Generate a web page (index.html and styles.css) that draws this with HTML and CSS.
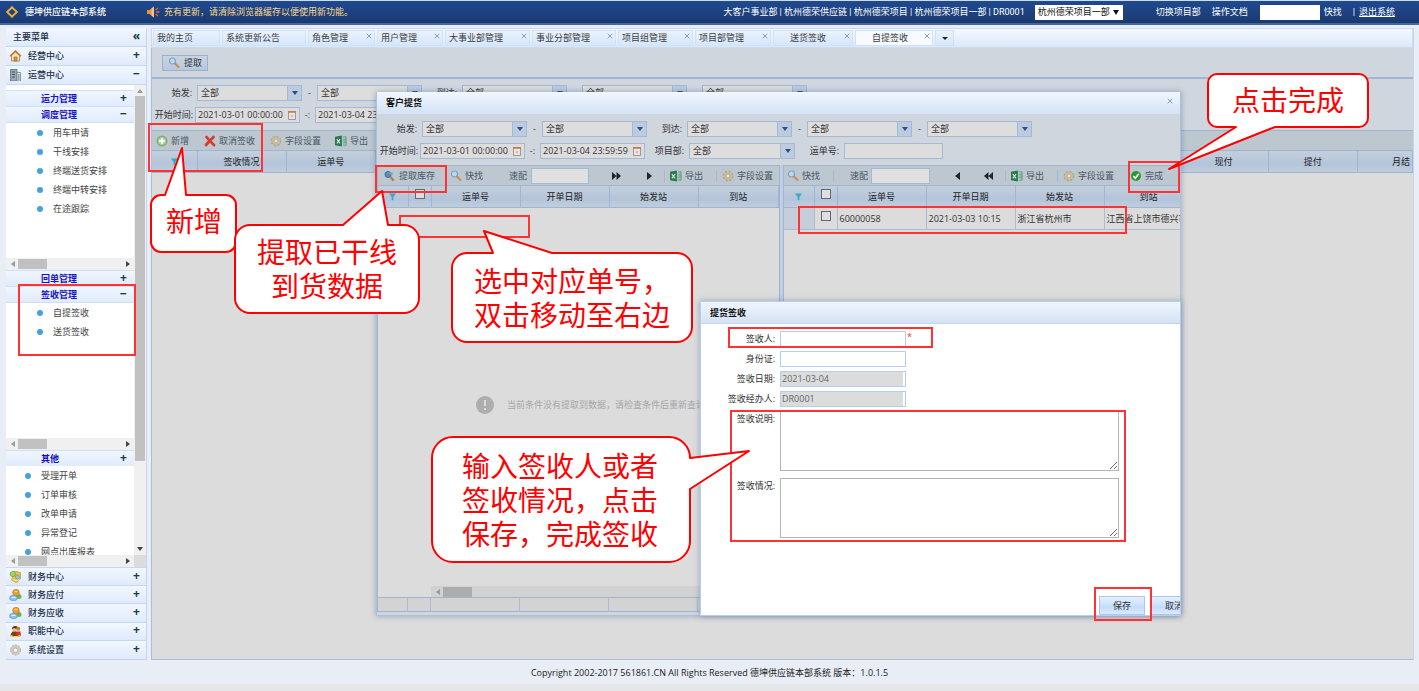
FILE: index.html
```html
<!DOCTYPE html>
<html lang="zh-CN">
<head>
<meta charset="utf-8">
<title>德坤供应链本部系统</title>
<link rel="stylesheet" href="styles.css">
</head>
<body>
<svg class="defs" aria-hidden="true">
  <symbol id="search" viewBox="0 0 12 12"><circle cx="4.500" cy="4" r="3" fill="#bcd9ee" stroke="#7ba3cc" stroke-width="1.200"/><path d="M7 6.500 10.500 10" stroke="#c88d55" stroke-width="2" stroke-linecap="round"/></symbol>
  <symbol id="fetch" viewBox="0 0 12 12"><circle cx="4" cy="4.500" r="3" fill="#4f8fc0" stroke="#3f6f9c"/><path d="M3 2.500h6l-1 3" fill="#7ba3a8"/><path d="M6.500 7 9.500 10.500" stroke="#b07b3c" stroke-width="2"/></symbol>
  <symbol id="excel" viewBox="0 0 13 12"><path d="M0 1.500 7.500 0v12L0 10.500z" fill="#2b7a4b"/><path d="M2 4l3.500 4.500M5.500 4 2 8.500" stroke="#dcebe0" stroke-width="1.200"/><path d="M8.500 1.500H12v9H8.500M8.500 4H12M8.500 6H12M8.500 8H12" fill="none" stroke="#5c9a76"/></symbol>
  <symbol id="gear" viewBox="0 0 12 12"><circle cx="6" cy="6" r="4.600" fill="#c5b693" stroke="#b3a88f" stroke-width="1.600" stroke-dasharray="2.200 1.400"/><circle cx="6" cy="6" r="3.800" fill="#c6bda6"/><circle cx="6" cy="6" r="1.800" fill="#e9e4d6" stroke="#b3a583" stroke-width=".6"/></symbol>
  <symbol id="add" viewBox="0 0 12 12"><circle cx="6" cy="6" r="4.800" fill="#a9cf9b" stroke="#7fae72" stroke-width="1.400"/><path d="M6 3.200v5.600M3.200 6h5.600" stroke="#fff" stroke-width="2"/></symbol>
  <symbol id="cross" viewBox="0 0 12 12"><path d="M2.500 2c2 2.500 4.500 5.500 7.500 8M9.500 2C7 4.500 4.500 7 2 10" fill="none" stroke="#d63b2f" stroke-width="2.800" stroke-linecap="round"/></symbol>
  <symbol id="check" viewBox="0 0 12 12"><circle cx="6" cy="6" r="5" fill="#269a35"/><path d="M3.300 6 5.300 8.200 8.800 3.800" fill="none" stroke="#fff" stroke-width="1.600"/></symbol>
  <symbol id="funnel" viewBox="0 0 8 8"><path d="M0 0h8L5 4v4L3 7V4z" fill="#35a9c9"/></symbol>
  <symbol id="x" viewBox="0 0 6 6"><path d="M.7.7l4.600 4.600M5.300.7.7 5.300" stroke="#7fa3b4"/></symbol>
  <symbol id="right" viewBox="0 0 5 8"><path d="M0 0l5 4-5 4z" fill="#1c2630"/></symbol>
  <symbol id="right2" viewBox="0 0 9 8"><path d="M0 0l4.500 4L0 8zM4.500 0 9 4 4.500 8z" fill="#1c2630"/></symbol>
  <symbol id="left" viewBox="0 0 5 8"><path d="M5 0 0 4l5 4z" fill="#1c2630"/></symbol>
  <symbol id="left2" viewBox="0 0 9 8"><path d="M4.500 0 0 4l4.500 4zM9 0 4.500 4 9 8z" fill="#1c2630"/></symbol>
  <symbol id="money" viewBox="0 0 12 12"><path d="M5 0l6 1.500v6L7 12 2 9z" fill="#efc044" stroke="#b98a2b" stroke-width=".6"/><circle cx="3.300" cy="3" r="2.600" fill="#a4d65e" stroke="#5f9f36" stroke-width=".7"/><circle cx="8" cy="6" r="2" fill="#8fc8ef" stroke="#4d8dbb" stroke-width=".6"/><path d="M3 8c2 2 5 2 7 0" stroke="#fff0b0" fill="none"/></symbol>
  <symbol id="coins" viewBox="0 0 12 12"><circle cx="9.500" cy="7.500" r="2.500" fill="#65b94c"/><circle cx="6.500" cy="3.600" r="3.300" fill="#f19a2f" stroke="#c36e15" stroke-width=".6"/><path d="M4.500 2.600 6.500 1.500l2 1.100-2 1z" fill="#ffd189"/><ellipse cx="4" cy="9" rx="3.900" ry="2.700" fill="#8fc4ee" stroke="#4a86bb" stroke-width=".6"/><path d="M2 8.500h4" stroke="#e8f5ff"/></symbol>
  <symbol id="people" viewBox="0 0 12 12"><path d="M1 11c0-3 2-5 4-5s4 2 4 5z" fill="#7b3f1e"/><circle cx="4.800" cy="4.600" r="2.200" fill="#f0bd83"/><path d="M2.500 4C2 1 7 0 8 2l-1 2-2-1z" fill="#5d2d17"/><circle cx="8.700" cy="3.700" r="2" fill="#d9752e"/><path d="M7 6.500h4L11.500 11H7z" fill="#d2362b"/><path d="M1 10.500c3 2 7 2 10 0" stroke="#f1cf34" stroke-width="1.600" fill="none"/></symbol>
  <symbol id="gear2" viewBox="0 0 12 12"><circle cx="6" cy="6" r="5" fill="#cfccc0" stroke="#b4b0a2" stroke-dasharray="2 1.200"/><circle cx="6" cy="6.300" r="2.300" fill="#f3f2ea" stroke="#aaa696" stroke-width=".7"/></symbol>
  <symbol id="home" viewBox="0 0 12 12"><path d="M2 5.500V11h8V5.500L6 2z" fill="#f3e4c3" stroke="#b0772d" stroke-width=".8"/><path d="M.5 6.200 6 1l5.500 5.200" fill="none" stroke="#b9782c" stroke-width="1.500"/><path d="M4.500 11V7h3v4z" fill="#d39b4c" stroke="#925c1c" stroke-width=".6"/></symbol>
  <symbol id="building" viewBox="0 0 12 12"><path d="M1 .5h6.500V12H1z" fill="#9aa8b2" stroke="#5d6e7a" stroke-width=".8"/><path d="M7.500 3.500H11V12H7.500z" fill="#e4e9ec" stroke="#71828e" stroke-width=".8"/><path d="M2.500 3h3M2.500 5.500h3M2.500 8h3M8.500 6H10M8.500 8H10M8.500 10H10" stroke="#44555f"/></symbol>
  <symbol id="cal" viewBox="0 0 8 9"><path d="M.5 1h7v7.500h-7z" fill="#e8e4e0" stroke="#9a8f90" stroke-width=".9"/><path d="M0 .8h8" stroke="#c77c4a" stroke-width="1.600"/><path d="M3 5h2" stroke="#d27f7a"/></symbol>
</svg>

<header class="top">
  <svg class="logo" viewBox="0 0 12 12"><path d="M3.500 3.800 6 1.200l2.500 2.600M8.500 3.800 11 6 8.500 8.200M8.500 8.200 6 10.800 3.500 8.200M3.500 8.200 1 6l2.500-2.200" fill="none" stroke="#f2b233" stroke-width="1.800"/></svg>
  <h1>德坤供应链本部系统</h1>
  <svg class="horn" viewBox="0 0 13 12"><path d="M0 4h2.500L7 .5v11L2.500 8H0z" fill="#e9914a"/><path d="M4.500 2.500 7 .5v11L4.500 9.500z" fill="#f7c08d"/><path d="M8.500 4 11 2M9 6h3.500M8.500 8 11 10" stroke="#d96a37" stroke-width="1.300"/></svg>
  <p class="notice">充有更新，请清除浏览器缓存以便使用新功能。</p>
  <p class="org">大客户事业部 | 杭州德荣供应链 | 杭州德荣项目 | 杭州德荣项目一部 | DR0001</p>
  <span class="project"><select aria-label="项目部"><option>杭州德荣项目一部</option></select></span>
  <a class="switch" href="#">切换项目部</a>
  <a class="docs" href="#">操作文档</a>
  <input class="quick" id="quick" type="text">
  <label for="quick">快找</label>
  <span class="bar">|</span>
  <a class="exit" href="#">退出系统</a>
</header>

<div class="workspace">
  <nav class="side">
    <div class="head"><b>主要菜单</b><button aria-label="收起">«</button></div>
    <div class="head menu"><svg><use href="#home"/></svg><b>经营中心</b><button>+</button></div>
    <div class="head menu"><svg><use href="#building"/></svg><b>运营中心</b><button>−</button></div>
    <div class="scroll">
      <div class="groups">
        <div class="group"><b>运力管理</b><button>+</button></div>
        <div class="group"><b>调度管理</b><button>−</button></div>
        <div class="tall">
          <ul class="five"><li><a href="#">用车申请</a></li><li><a href="#">干线安排</a></li><li><a href="#">终端送货安排</a></li><li><a href="#">终端中转安排</a></li><li><a href="#">在途跟踪</a></li></ul>
          <div class="hbar"><i></i><s></s><u></u></div>
        </div>
        <div class="group"><b>回单管理</b><button>+</button></div>
        <div class="group"><b>签收管理</b><button>−</button></div>
        <div class="tall">
          <ul><li><a href="#">自提签收</a></li><li><a href="#">送货签收</a></li></ul>
          <div class="hbar"><i></i><s></s><u></u></div>
        </div>
        <div class="group"><b>其他</b><button>+</button></div>
        <ul class="five outer"><li><a href="#">受理开单</a></li><li><a href="#">订单审核</a></li><li><a href="#">改单申请</a></li><li><a href="#">异常登记</a></li><li><a href="#">网点出库报表</a></li></ul>
      </div>
      <div class="vbar"><i></i><s></s><u></u></div>
    </div>
    <div class="hrow"><div class="hbar"><i></i><s></s><u></u></div></div>
    <div class="modules">
      <div class="head menu"><svg><use href="#money"/></svg><b>财务中心</b><button>+</button></div>
      <div class="head menu"><svg><use href="#coins"/></svg><b>财务应付</b><button>+</button></div>
      <div class="head menu"><svg><use href="#coins"/></svg><b>财务应收</b><button>+</button></div>
      <div class="head menu"><svg><use href="#people"/></svg><b>职能中心</b><button>+</button></div>
      <div class="head menu"><svg><use href="#gear2"/></svg><b>系统设置</b><button>+</button></div>
    </div>
  </nav>

  <main class="main">
    <div class="tabs">
      <a href="#" class="tab">我的主页</a>
      <a href="#" class="tab">系统更新公告</a>
      <a href="#" class="tab">角色管理<svg><use href="#x"/></svg></a>
      <a href="#" class="tab">用户管理<svg><use href="#x"/></svg></a>
      <a href="#" class="tab">大事业部管理<svg><use href="#x"/></svg></a>
      <a href="#" class="tab">事业分部管理<svg><use href="#x"/></svg></a>
      <a href="#" class="tab">项目组管理<svg><use href="#x"/></svg></a>
      <a href="#" class="tab">项目部管理<svg><use href="#x"/></svg></a>
      <a href="#" class="tab roomy">送货签收<svg><use href="#x"/></svg></a>
      <a href="#" class="tab roomy on">自提签收<svg><use href="#x"/></svg></a>
      <button class="tab more" aria-label="更多"></button>
    </div>
    <div class="pane">
      <div class="actions"><button class="fetch"><svg class="ic"><use href="#search"/></svg>提取</button></div>
      <div class="filter">
        <div class="row1">
          <label for="a1">始发:</label><span class="combo"><select id="a1"><option>全部</option></select></span><span>-</span><span class="combo"><select aria-label="始发二"><option>全部</option></select></span>
          <label for="a2">到达:</label><span class="combo"><select id="a2"><option>全部</option></select></span><span></span><span class="combo"><select aria-label="到达二"><option>全部</option></select></span><span></span><span class="combo"><select aria-label="到达三"><option>全部</option></select></span>
        </div>
        <div class="row2">
          <label for="a3">开始时间:</label><span class="date"><input id="a3" value="2021-03-01 00:00:00"><svg><use href="#cal"/></svg></span><span>-:</span><span class="date"><input aria-label="结束时间" value="2021-03-04 23:59:59"><svg><use href="#cal"/></svg></span>
        </div>
      </div>
      <div class="toolbar bgbar">
        <button><svg class="ic"><use href="#add"/></svg>新增</button>
        <button><svg class="ic"><use href="#cross"/></svg>取消签收</button>
        <button><svg class="ic"><use href="#gear"/></svg>字段设置</button>
        <button><svg class="ic"><use href="#excel"/></svg>导出</button>
      </div>
      <table class="grid bggrid">
        <colgroup><col class="c-first"><col class="c89"><col><col><col><col><col><col><col><col><col><col><col><col><col class="c-last"></colgroup>
        <tr><th><svg class="fn"><use href="#funnel"/></svg></th><th>签收情况</th><th>运单号</th><th></th><th></th><th></th><th></th><th></th><th></th><th></th><th></th><th></th><th>现付</th><th>提付</th><th class="cut">月结</th></tr>
      </table>
    </div>
  </main>
</div>

<footer class="foot">Copyright 2002-2017 561861.CN All Rights Reserved 德坤供应链本部系统 版本：1.0.1.5</footer>

<section class="dialog pickup">
  <h2 class="title">客户提货<button aria-label="关闭"><svg><use href="#x"/></svg></button></h2>
  <div class="filter">
    <div class="row1">
      <label for="b1">始发:</label><span class="combo"><select id="b1"><option>全部</option></select></span><span>-</span><span class="combo"><select aria-label="始发市"><option>全部</option></select></span>
      <label for="b2">到达:</label><span class="combo"><select id="b2"><option>全部</option></select></span><span>-</span><span class="combo"><select aria-label="到达市"><option>全部</option></select></span><span>-</span><span class="combo"><select aria-label="到达区"><option>全部</option></select></span>
    </div>
    <div class="row2">
      <label for="b3">开始时间:</label><span class="date"><input id="b3" value="2021-03-01 00:00:00"><svg><use href="#cal"/></svg></span><span>-:</span><span class="date"><input aria-label="结束时间" value="2021-03-04 23:59:59"><svg><use href="#cal"/></svg></span>
      <label for="b4">项目部:</label><span class="combo"><select id="b4"><option>全部</option></select></span>
      <label for="b5">运单号:</label><input class="plain" id="b5">
    </div>
  </div>
  <div class="split">
    <div class="half first">
      <div class="toolbar lbar">
        <button><svg class="ic"><use href="#fetch"/></svg>提取库存</button>
        <button><svg class="ic"><use href="#search"/></svg>快找</button>
        <label for="m1">速配</label><input class="plain" id="m1">
        <button class="end" aria-label="全部右移"><svg class="a2"><use href="#right2"/></svg></button>
        <button class="end far" aria-label="右移"><svg class="a1"><use href="#right"/></svg></button>
        <button class="sep"><svg class="ic"><use href="#excel"/></svg>导出</button>
        <button class="sep"><svg class="ic"><use href="#gear"/></svg>字段设置</button>
      </div>
      <table class="grid">
        <colgroup><col class="c30"><col class="c23"><col class="c89"><col class="c89"><col class="c89"><col></colgroup>
        <tr><th><svg class="fn"><use href="#funnel"/></svg></th><th><input type="checkbox" aria-label="全选"></th><th>运单号</th><th>开单日期</th><th>始发站</th><th>到站</th></tr>
      </table>
      <div class="empty"><svg viewBox="0 0 18 18"><circle cx="9" cy="9" r="9" fill="#aeaeae"/><path d="M9 4v6M9 12v2" stroke="#dcdcdc" stroke-width="2"/></svg>当前条件没有提取到数据，请检查条件后重新查询</div>
      <div class="hbar long"><i></i><s></s></div>
      <div class="sums"><span></span><span></span><span></span><span></span><span></span></div>
    </div>
    <div class="half second">
      <div class="toolbar rbar">
        <button><svg class="ic"><use href="#search"/></svg>快找</button>
        <label class="sep" for="m2">速配</label><input class="plain" id="m2">
        <button class="end" aria-label="左移"><svg class="a1"><use href="#left"/></svg></button>
        <button class="end far" aria-label="全部左移"><svg class="a2"><use href="#left2"/></svg></button>
        <button class="sep"><svg class="ic"><use href="#excel"/></svg>导出</button>
        <button class="sep"><svg class="ic"><use href="#gear"/></svg>字段设置</button>
        <button><svg class="ic"><use href="#check"/></svg>完成</button>
      </div>
      <table class="grid wide">
        <colgroup><col class="c30"><col class="c23"><col class="c89"><col class="c89"><col class="c89"><col class="c89"></colgroup>
        <tr><th><svg class="fn"><use href="#funnel"/></svg></th><th><input type="checkbox" aria-label="全选"></th><th>运单号</th><th>开单日期</th><th>始发站</th><th>到站</th></tr>
        <tr><td></td><td class="mid"><input type="checkbox" aria-label="选择"></td><td>60000058</td><td>2021-03-03 10:15</td><td>浙江省杭州市</td><td>江西省上饶市德兴市</td></tr>
      </table>
    </div>
  </div>
</section>

<section class="dialog sign">
  <h2 class="title">提货签收</h2>
  <form class="form">
    <label for="f1">签收人:</label><span class="req"><input id="f1"><em>*</em></span>
    <label for="f2">身份证:</label><input id="f2">
    <label for="f3">签收日期:</label><span class="ro"><input id="f3" value="2021-03-04" readonly></span>
    <label for="f4">签收经办人:</label><span class="ro"><input id="f4" value="DR0001" readonly></span>
    <label for="f5">签收说明:</label><textarea id="f5"></textarea>
    <label for="f6">签收情况:</label><textarea id="f6"></textarea>
  </form>
  <div class="buttons"><button>保存</button><button>取消</button></div>
</section>

<div class="notes">
  <span class="mark m-tools"></span><span class="mark m-menu"></span><span class="mark m-stock"></span><span class="mark m-slot"></span><span class="mark m-line"></span><span class="mark m-done"></span><span class="mark m-signer"></span><span class="mark m-memo"></span><span class="mark m-save"></span>
  <svg class="bubbles" width="1419" height="691" viewBox="0 0 1419 691">
    <path d="M161 195h4L182 148 186 195h40a10 10 0 0 1 10 10v37a10 10 0 0 1-10 10h-65a10 10 0 0 1-10-10v-37a10 10 0 0 1 10-10z"/>
    <path d="M250 225h93L382 191 388 225h16a15 15 0 0 1 15 15v58a15 15 0 0 1-15 15h-154a15 15 0 0 1-15-15v-58a15 15 0 0 1 15-15z"/>
    <path d="M467 253h26L484 231 552 253h125a15 15 0 0 1 15 15v59a15 15 0 0 1-15 15h-210a15 15 0 0 1-15-15v-59a15 15 0 0 1 15-15z"/>
    <path d="M453 437h216a21 21 0 0 1 21 21L749 451 690 489v52a21 21 0 0 1-21 21h-216a21 21 0 0 1-21-21v-83a21 21 0 0 1 21-21z"/>
    <path d="M1217 74h142a9 9 0 0 1 9 9v35a9 9 0 0 1-9 9h-84L1169 169 1236 127h-19a9 9 0 0 1-9-9v-35a9 9 0 0 1 9-9z"/>
  </svg>
  <p class="say s1">新增</p>
  <p class="say s2">提取已干线<br>到货数据</p>
  <p class="say s3">选中对应单号，<br>双击移动至右边</p>
  <p class="say s4">输入签收人或者<br>签收情况，点击<br>保存，完成签收</p>
  <p class="say s5">点击完成</p>
</div>
</body>
</html>
```
FILE: styles.css
```css
* { box-sizing: border-box; }
body {
  margin: 0;
  height: 100vh;
  display: flex;
  flex-direction: column;
  position: relative;
  overflow: hidden;
  background: #e8edf6;
  color: #333;
  font: 9px/12px "Open Sans", "Noto Sans CJK SC", sans-serif;
}
button, input, select, textarea { font: inherit; color: inherit; margin: 0; padding: 0; border: 0; background: none; border-radius: 0; outline: 0; min-width: 0; }
select { appearance: none; }
a { color: inherit; text-decoration: none; }
h1, h2, p, ul { margin: 0; padding: 0; font-size: 9px; list-style: none; }
i, s, u, em { font-style: normal; text-decoration: none; }
.defs { position: absolute; width: 0; height: 0; }
svg { display: block; flex: none; }

.top {
  height: 25px;
  flex: none;
  display: flex;
  align-items: center;
  padding: 0 24px 0 6px;
  background: linear-gradient(#1e4a92, #1c396f);
  border-top: 1px solid #d5dbe6;
  border-bottom: 2px solid #41689f;
  color: #fff;
  white-space: nowrap;
  font-family: Roboto, "Noto Sans CJK SC", sans-serif;
}
.logo { width: 12px; height: 12px; margin-right: 7px; }
.top h1 { font-weight: 500; margin-right: 41px; }
.horn { width: 13px; height: 12px; margin-right: 4px; }
.notice { color: #fbd98a; }
.org { margin-left: auto; margin-right: 10px; }
.project { position: relative; width: 88px; height: 15px; background: #fff; color: #111; margin-right: 33px; display: flex; }
.project select { width: 100%; padding-left: 3px; }
.project::after { content: ""; position: absolute; right: 4px; top: 5px; border: solid transparent; border-width: 5px 3px 0; border-top-color: #111; pointer-events: none; }
.switch { margin-right: 11px; }
.docs { margin-right: 12px; }
.quick { width: 60px; height: 15px; background: #fff; color: #111; margin-right: 4px; }
.bar { margin: 0 4px 0 11px; }
.exit { text-decoration: underline; }

.workspace { flex: 1; display: flex; gap: 4px; padding: 3px 5px 0 6px; min-height: 0; }
.side { width: 141px; display: flex; flex-direction: column; border: 1px solid #c3d6f0; border-width: 0 1px 1px 0; background: #fff; }
.head {
  height: 19px;
  flex: none;
  display: flex;
  align-items: center;
  padding: 0 5px 0 7px;
  background: linear-gradient(#f2f7ff, #dfeafb);
  border-bottom: 1px solid #c3d9f5;
  color: #1c3049;
}
.head b { font-weight: 500; }
.head button, .group button { margin: 0 0 2px auto; width: 9px; font: 700 12px/12px "Noto Sans", sans-serif; color: #143c46; text-align: center; }
.menu { padding-left: 3px; }
.menu svg { width: 13px; height: 12px; margin-right: 6px; }
.scroll { flex: 1; display: flex; min-height: 0; }
.groups { width: 128px; padding-top: 5px; display: flex; flex-direction: column; overflow: hidden; }
.group {
  flex: none;
  height: 16px;
  display: flex;
  align-items: center;
  padding: 0 6px 0 35px;
  background: linear-gradient(#f0f6ff, #e0ebfa);
  border-top: 1px solid #cfe0f5;
  color: #1712c8;
}
.group b { font-weight: 700; }
.group + .tall { border-top: 1px solid #cfe0f5; }
.tall { flex: none; height: 148px; display: flex; flex-direction: column; justify-content: space-between; }
.side ul { display: grid; grid-auto-rows: 19px; padding-left: 31px; flex: none; }
.side ul.five { height: 96px; grid-auto-rows: 1fr; }
.side ul.outer { padding-left: 19px; }
.side li { display: flex; align-items: center; gap: 10px; color: #444; white-space: nowrap; }
.side li::before { content: ""; width: 6px; height: 6px; border-radius: 3px; background: #45a0db; }
.hbar { height: 12px; display: flex; align-items: center; background: #f0f0f0; padding: 0 4px 0 5px; flex: none; }
.hbar i, .hbar u { width: 0; height: 0; border: solid transparent; border-width: 3px 4px 3px 0; border-right-color: #999; }
.hbar u { border-width: 3px 0 3px 4px; border-left-color: #444; margin-left: auto; }
.hbar s { width: 29px; height: 10px; margin-left: 3px; background: #c1c1c1; }
.vbar { width: 12px; background: #f0f0f0; display: flex; flex-direction: column; align-items: center; padding: 4px 0; }
.vbar i, .vbar u { border: solid transparent; border-width: 0 3px 4px; border-bottom-color: #999; }
.vbar u { border-width: 4px 3px 0; border-top-color: #444; margin-top: auto; }
.vbar s { width: 10px; height: 79%; margin-top: 3px; background: #c1c1c1; }
.hrow { background: #dcdcdc; }
.hrow .hbar { width: 128px; }
.modules { height: 92px; flex: none; display: grid; grid-auto-rows: 1fr; border-top: 1px solid #c3d9f5; }
.modules .head { height: auto; }
.modules .head:last-child { border: 0; }

.main { flex: 1; min-width: 0; display: flex; flex-direction: column; border-right: 1px solid #c5d7ef; }
.tabs {
  height: 20px;
  flex: none;
  display: grid;
  grid-template-columns: 67px 84px 67px 66px 85px 84px 75px 76px 80px 78px 19px;
  gap: 2px;
  padding: 1px 0 1px 1px;
  background: linear-gradient(#f4f8ff, #dce8f8);
  border: 1px solid #c9daf1;
}
.tab { display: flex; align-items: center; padding-left: 3px; background: linear-gradient(#eaf2fd, #d6e6fb); border: 1px solid #d2e2f6; color: #3c3c3c; white-space: nowrap; }
.tab svg { width: 6px; height: 6px; margin: 0 2px 5px auto; }
.roomy { padding-left: 16px; }
.on { background: #f7faff; }
.more::after { content: ""; border: solid transparent; border-width: 3px 3px 0; border-top-color: #222; margin-left: 3px; }
.pane { flex: 1; background: #dcdcdc; border: 1px solid #a9bfd9; border-width: 0 0 1px 1px; overflow: hidden; }
.actions { height: 31px; padding: 7px 10px; background: #cfd6de; border-bottom: 2px solid #9fb6d2; }
.fetch { display: flex; align-items: center; gap: 4px; height: 16px; padding: 0 5px; border: 1px solid #9ab1cf; background: linear-gradient(#c9d4e2, #b7c8de); }
.ic { width: 12px; height: 12px; }
.filter { height: 51px; padding-top: 6px; background: #cfd6de; }
.row1, .row2 { display: grid; height: 16px; margin-bottom: 6px; align-items: center; text-align: center; }
.row1 { grid-template-columns: 45px 105px 15px 105px 40px 105px 15px 105px 15px 105px; }
.row2 { grid-template-columns: 43px 105px 15px 105px 44px 106px 49px 99px; }
.filter label { text-align: right; padding-right: 5px; white-space: nowrap; }
.row2 label:first-child { padding-right: 2px; }
.combo, .date { position: relative; display: flex; height: 16px; border: 1px solid #a3b9d6; background: #dddddd; }
.combo select { width: 100%; padding-left: 3px; }
.combo::before { content: ""; position: absolute; inset: 0 0 0 auto; width: 13px; background: #bccbe0; border-left: 1px solid #a3b9d6; pointer-events: none; }
.combo::after { content: ""; position: absolute; right: 3px; top: 5px; border: solid transparent; border-width: 4px 3px 0; border-top-color: #2c4f86; pointer-events: none; }
.date { align-items: center; padding-left: 2px; }
.date input { width: 88px; }
.date svg { width: 8px; height: 9px; margin-left: 2px; }
.plain { height: 16px; border: 1px solid #a3b9d6; background: #ddd; }
.toolbar { display: grid; align-items: center; height: 20px; flex: none; border-top: 1px solid #9fb6d2; background: #bcc7d0; color: #4a5665; white-space: nowrap; }
.toolbar button { display: flex; align-items: center; gap: 3px; }
.bgbar { grid-template-columns: 48px 66px 65px auto; padding-left: 4px; }
.grid { width: 100%; table-layout: fixed; border-collapse: collapse; white-space: nowrap; }
.grid th { height: 22px; padding: 0; font-weight: 400; color: #222; text-align: center; background: linear-gradient(#c4cfdb, #b3c4da 60%, #c2cddb); border: solid #9fb6d2; border-width: 1px 1px 1px 0; }
.grid td { height: 22px; padding: 0 2px; border: solid #a9bdd6; border-width: 0 1px 1px 0; }
.grid td:first-child { background: #c6cedb; }
.grid .cut { text-align: right; padding-right: 2px; }
.fn { width: 7px; height: 8px; margin: auto; }
.c-first { width: 45px; }
.c89 { width: 89px; }
.c30 { width: 30px; }
.c23 { width: 23px; }
.c-last { width: 55px; }
.grid input { appearance: none; display: block; width: 10px; height: 10px; margin: 0 auto 6px; border: 1px solid #5f6a75; background: #dfdfdf; }

.foot { height: 31px; flex: none; padding-top: 7px; border-bottom: 7px solid #e5e6e8; text-align: center; color: #222; }

.dialog { position: absolute; bottom: 75px; right: 238px; box-shadow: 0 0 6px rgba(60, 90, 130, .45); display: flex; flex-direction: column; overflow: hidden; }
.title { display: flex; align-items: center; height: 22px; padding: 0 7px 0 9px; font-weight: 700; color: #111; background: linear-gradient(#eff5fe, #d5e2f3); flex: none; }
.title button { margin: 0 0 4px auto; }
.title svg { width: 6px; height: 6px; }
.pickup { left: 376px; top: 92px; border: 1px solid #a9c0de; border-top: 0; padding-bottom: 3px; background: #cfd6de; }
.pickup > .title { background: linear-gradient(#f2f7ff, #d3e2f5); }
.pickup .filter { padding-top: 7px; flex: none; }
.split { flex: 1; display: grid; grid-template-columns: 403px 1fr; gap: 3px; background: #c3cfe0; min-height: 0; }
.half { min-width: 0; display: flex; flex-direction: column; overflow: hidden; background: #dcdcdc; border: 1px solid #9fb6d2; border-width: 0 1px 1px; }
.second { border-right: 0; }
.half .toolbar .plain { background: #e0e0e0; }
.lbar { grid-template-columns: 66px 59px 22px 58px 32px 43px 52px auto; padding-left: 6px; justify-content: start; }
.rbar { grid-template-columns: 46px 38px 59px 30px 45px 52px 73px auto; padding-left: 3px; justify-content: start; }
.toolbar .end { justify-content: flex-end; }
.toolbar .far { padding-right: 12px; }
.a1 { width: 5px; height: 8px; }
.a2 { width: 9px; height: 8px; }
.toolbar .sep { border-left: 1px solid #a3b9d6; padding-left: 5px; }
.toolbar label.sep { padding-left: 16px; }
.grid.wide { width: 409px; }
.empty { flex: 1; display: flex; align-items: center; gap: 13px; padding: 16px 0 0 98px; color: #a6a6a6; white-space: nowrap; }
.empty svg { width: 18px; height: 18px; }
.long { margin-left: 53px; height: 11px; background: #d2d2d2; }
.long s { background: #acacac; }
.sums { height: 14px; display: grid; grid-template-columns: 30px 23px 89px 89px 89px; background: #d3d3d3; border-top: 1px solid #9fb6d2; flex: none; }
.sums span { border-right: 1px solid #a9bdd6; }

.sign { left: 700px; top: 301px; background: #fff; border: 1px solid #b7cfee; }
.sign .title { border-bottom: 1px solid #c3d6ef; }
.form { display: grid; grid-template-columns: 74px auto; column-gap: 5px; row-gap: 4px; padding-top: 7px; justify-content: start; }
.form label { text-align: right; line-height: 16px; }
.form input { width: 126px; height: 16px; border: 1px solid #b5cdf0; }
.form .req { display: flex; gap: 1px; color: #e33; }
.ro { width: 126px; height: 16px; display: flex; border: 1px solid #b5cdf0; }
.form .ro input { width: 122px; height: auto; border: 0; background: #dcdcdc; color: #666; padding-left: 1px; }
.form textarea { display: block; width: 339px; height: 60px; border: 1px solid #b4b4b4; margin-bottom: 3px; }
.buttons { margin-top: auto; display: flex; gap: 6px; padding-left: 398px; }
.buttons button { flex: none; width: 46px; height: 19px; border: 1px solid #a9c6ec; background: linear-gradient(#e6f0fd, #c3dcfa 60%, #dbe9fb); }

.notes { position: absolute; inset: 0; pointer-events: none; }
.bubbles { position: absolute; left: 0; top: 0; }
.bubbles path { fill: #fff; stroke: #f00; stroke-width: 2; stroke-linejoin: round; }
.mark { position: absolute; border: 2px solid #f33; }
.m-tools { left: 148px; top: 123px; width: 115px; height: 49px; }
.m-menu { left: 18px; top: 284px; width: 118px; height: 72px; }
.m-stock { left: 375px; top: 165px; width: 72px; height: 28px; }
.m-slot { left: 399px; top: 215px; width: 131px; height: 23px; }
.m-line { left: 798px; top: 206px; width: 329px; height: 28px; }
.m-done { left: 1128px; top: 161px; width: 52px; height: 32px; }
.m-signer { left: 728px; top: 327px; width: 205px; height: 21px; }
.m-memo { left: 730px; top: 410px; width: 396px; height: 132px; }
.m-save { left: 1094px; top: 587px; width: 58px; height: 34px; }
.say { position: absolute; font: 28px/34px "Noto Sans CJK SC", sans-serif; color: #f00; white-space: nowrap; text-align: center; }
.s1 { left: 166px; top: 203px; }
.s2 { left: 257px; top: 234px; }
.s3 { left: 474px; top: 263px; text-align: left; }
.s4 { left: 462px; top: 448px; text-align: left; }
.s5 { left: 1232px; top: 82px; }
```
